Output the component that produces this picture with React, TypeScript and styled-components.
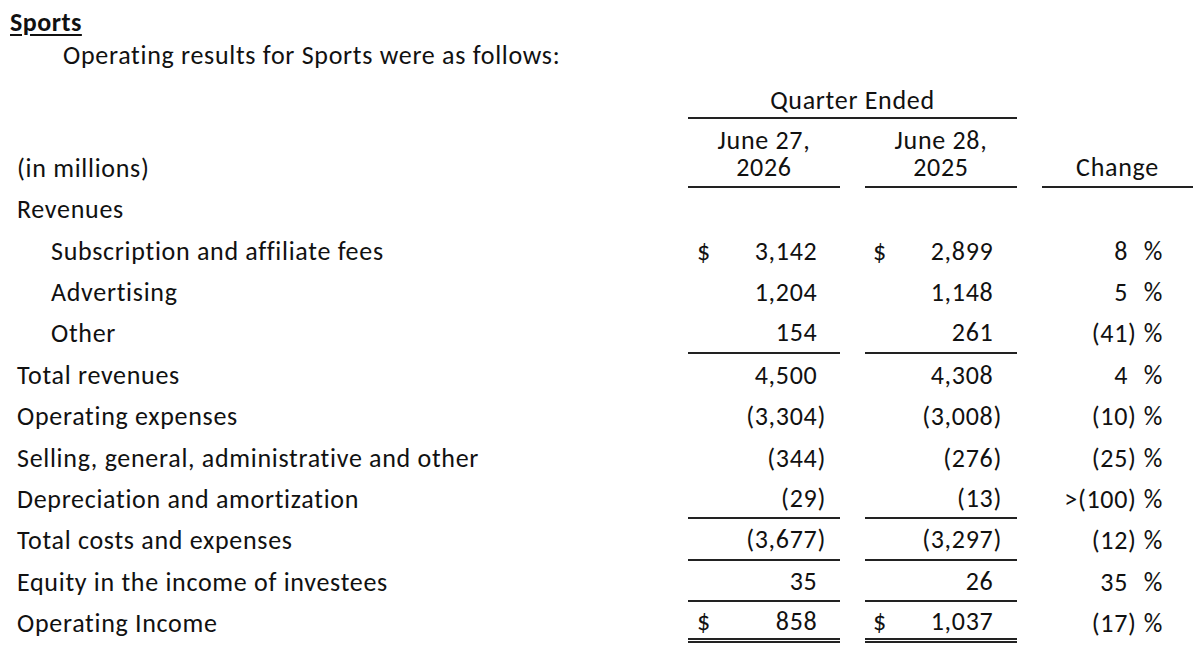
import React from 'react';
import styled, { createGlobalStyle, css } from 'styled-components';

const GlobalStyle = createGlobalStyle`
  html, body {
    margin: 0;
    padding: 0;
    background: #ffffff;
  }
  body {
    font-family: Carlito, Lato, 'Liberation Sans', sans-serif;
    color: #111111;
  }
`;

const Page = styled.div`
  width: 1198px;
  height: 652px;
  box-sizing: border-box;
  padding: 9px 5px 0 10px;
  font-size: 26px;
  letter-spacing: 0.7px;
  line-height: 27px;
  overflow: hidden;
`;

const Title = styled.div`
  font-weight: 700;
  letter-spacing: 0.5px;
  text-decoration: underline;
  text-decoration-thickness: 2px;
  text-underline-offset: 3px;
`;

const Intro = styled.div`
  margin-top: 6px;
  margin-left: 53px;
`;

const Grid = styled.div`
  margin-left: 7px;
  display: grid;
  grid-template-columns: 1fr 152px 152px 151px;
  column-gap: 25px;
`;

const HeaderGrid = styled(Grid)`
  margin-top: 16px;
`;

const Rule = css<{ $rule?: 'single' | 'double' }>`
  ${(p) => p.$rule === 'single' && 'border-bottom: 2px solid #222;'}
  ${(p) => p.$rule === 'double' && 'border-bottom: 5px double #222;'}
`;

const GroupHead = styled.div`
  grid-column: 2 / 4;
  text-align: center;
  padding: 1px 0 2px;
  border-bottom: 2px solid #222;
  margin-bottom: 8px;
  line-height: 29px;
`;

const HeadSpacer = styled.div`
  grid-column: 1 / 2;
`;

const UnitsLabel = styled.div`
  grid-column: 1 / 2;
  align-self: end;
  padding-bottom: 6px;
`;

const ColHead = styled.div`
  display: flex;
  flex-direction: column;
  justify-content: flex-end;
  text-align: center;
  padding-bottom: 5px;
  border-bottom: 2px solid #222;
`;

const Row = styled(Grid)`
  height: 41.4px;
  box-sizing: border-box;
  padding-top: 2px;
  align-items: stretch;
`;

const Label = styled.div<{ $indent?: boolean }>`
  display: flex;
  align-items: center;
  padding-left: ${(p) => (p.$indent ? '34px' : '0')};
  white-space: nowrap;
`;

const Amount = styled.div<{ $rule?: 'single' | 'double'; $left: number; $right: number }>`
  display: flex;
  align-items: center;
  justify-content: space-between;
  box-sizing: border-box;
  padding-left: ${(p) => p.$left}px;
  padding-right: ${(p) => p.$right}px;
  ${Rule}
`;

const Figure = styled.span<{ $open: boolean }>`
  margin-left: auto;
  ${(p) =>
    p.$open &&
    css`
      &::after {
        content: ')';
        visibility: hidden;
      }
    `}
`;

const Change = styled.div`
  display: flex;
  align-items: center;
  justify-content: flex-end;
  padding-right: 30px;
`;

const Percent = styled.span`
  margin-left: 7px;
`;

type Line = {
  label: string;
  indent?: boolean;
  cur?: string;
  prev?: string;
  change?: string;
  dollar?: boolean;
  rule?: 'single' | 'double';
};

const lines: Line[] = [
  { label: 'Revenues' },
  { label: 'Subscription and affiliate fees', indent: true, cur: '3,142', prev: '2,899', change: '8', dollar: true },
  { label: 'Advertising', indent: true, cur: '1,204', prev: '1,148', change: '5' },
  { label: 'Other', indent: true, cur: '154', prev: '261', change: '(41)', rule: 'single' },
  { label: 'Total revenues', cur: '4,500', prev: '4,308', change: '4' },
  { label: 'Operating expenses', cur: '(3,304)', prev: '(3,008)', change: '(10)' },
  { label: 'Selling, general, administrative and other', cur: '(344)', prev: '(276)', change: '(25)' },
  { label: 'Depreciation and amortization', cur: '(29)', prev: '(13)', change: '>(100)', rule: 'single' },
  { label: 'Total costs and expenses', cur: '(3,677)', prev: '(3,297)', change: '(12)', rule: 'single' },
  { label: 'Equity in the income of investees', cur: '35', prev: '26', change: '35', rule: 'single' },
  { label: 'Operating Income', cur: '858', prev: '1,037', change: '(17)', dollar: true, rule: 'double' },
];

const Num: React.FC<{ value?: string }> = ({ value }) =>
  value ? <Figure $open={!value.endsWith(')')}>{value}</Figure> : null;

export default function App() {
  return (
    <Page>
      <GlobalStyle />
      <Title>Sports</Title>
      <Intro>Operating results for Sports were as follows:</Intro>

      <HeaderGrid>
        <HeadSpacer />
        <GroupHead>Quarter Ended</GroupHead>
        <HeadSpacer />
        <UnitsLabel>(in millions)</UnitsLabel>
        <ColHead>
          <span>June 27,</span>
          <span>2026</span>
        </ColHead>
        <ColHead>
          <span>June 28,</span>
          <span>2025</span>
        </ColHead>
        <ColHead>Change</ColHead>
      </HeaderGrid>

      {lines.map((l) => (
        <Row key={l.label}>
          <Label $indent={l.indent}>{l.label}</Label>
          <Amount $rule={l.rule} $left={9} $right={14}>
            {l.dollar && <span>$</span>}
            <Num value={l.cur} />
          </Amount>
          <Amount $rule={l.rule} $left={8} $right={15}>
            {l.dollar && <span>$</span>}
            <Num value={l.prev} />
          </Amount>
          <Change>
            {l.change && (
              <>
                <Num value={l.change} />
                <Percent>%</Percent>
              </>
            )}
          </Change>
        </Row>
      ))}
    </Page>
  );
}
